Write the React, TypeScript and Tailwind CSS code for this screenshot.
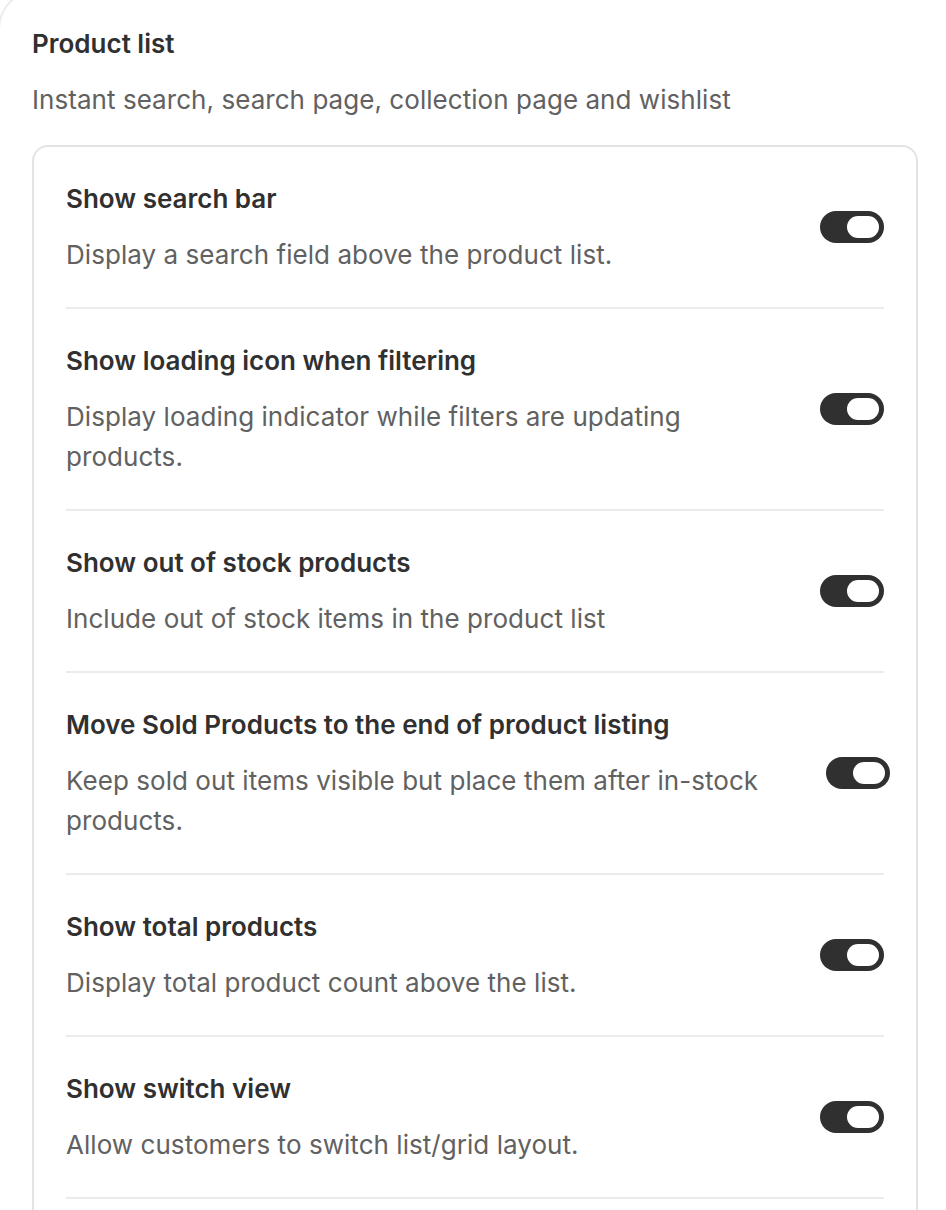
import React from "react";

type Row = { title: string; desc: string; shift?: boolean };

const rows: Row[] = [
  { title: "Show search bar", desc: "Display a search field above the product list." },
  { title: "Show loading icon when filtering", desc: "Display loading indicator while filters are updating products." },
  { title: "Show out of stock products", desc: "Include out of stock items in the product list" },
  { title: "Move Sold Products to the end of product listing", desc: "Keep sold out items visible but place them after in-stock products.", shift: true },
  { title: "Show total products", desc: "Display total product count above the list." },
  { title: "Show switch view", desc: "Allow customers to switch list/grid layout." },
];

function Toggle({ shift }: { shift?: boolean }) {
  return (
    <div
      className={
        "flex h-[32px] w-[64px] shrink-0 items-center justify-end rounded-full bg-[#303030] p-[5px]" +
        (shift ? " -mr-[6px]" : "")
      }
    >
      <div className="h-[22px] w-[32px] rounded-full bg-white" />
    </div>
  );
}

export default function App() {
  return (
    <div
      className="h-[1210px] w-[946px] overflow-hidden bg-white text-[#303030]"
      style={{ fontFamily: "Inter, 'Noto Sans', sans-serif" }}
    >
      <div className="-ml-[2px] -mt-[11px] w-[990px] rounded-tl-[40px] border-l-2 border-t-2 border-[#ececec] bg-white pl-[32px] pt-[33px]">
        <div className="text-[26px] font-semibold leading-[40px]">Product list</div>
        <div className="mt-[16px] text-[26px] leading-[40px] tracking-[0.05px] text-[#616161]">
          Instant search, search page, collection page and wishlist
        </div>
        <div className="mt-[25px] w-[886px] rounded-[16px] border-2 border-[#e3e3e3] px-[32px]">
          {rows.map((r) => (
            <div
              key={r.title}
              className="flex items-center justify-between gap-[32px] border-b-2 border-[#ebebeb] py-[32px]"
            >
              <div className="flex w-[722px] flex-col gap-[16px]">
                <div className="text-[26px] font-semibold leading-[40px]">{r.title}</div>
                <div className="text-[26px] leading-[40px] tracking-[0.05px] text-[#616161]">{r.desc}</div>
              </div>
              <Toggle shift={r.shift} />
            </div>
          ))}
          <div className="h-[60px]" />
        </div>
      </div>
    </div>
  );
}
